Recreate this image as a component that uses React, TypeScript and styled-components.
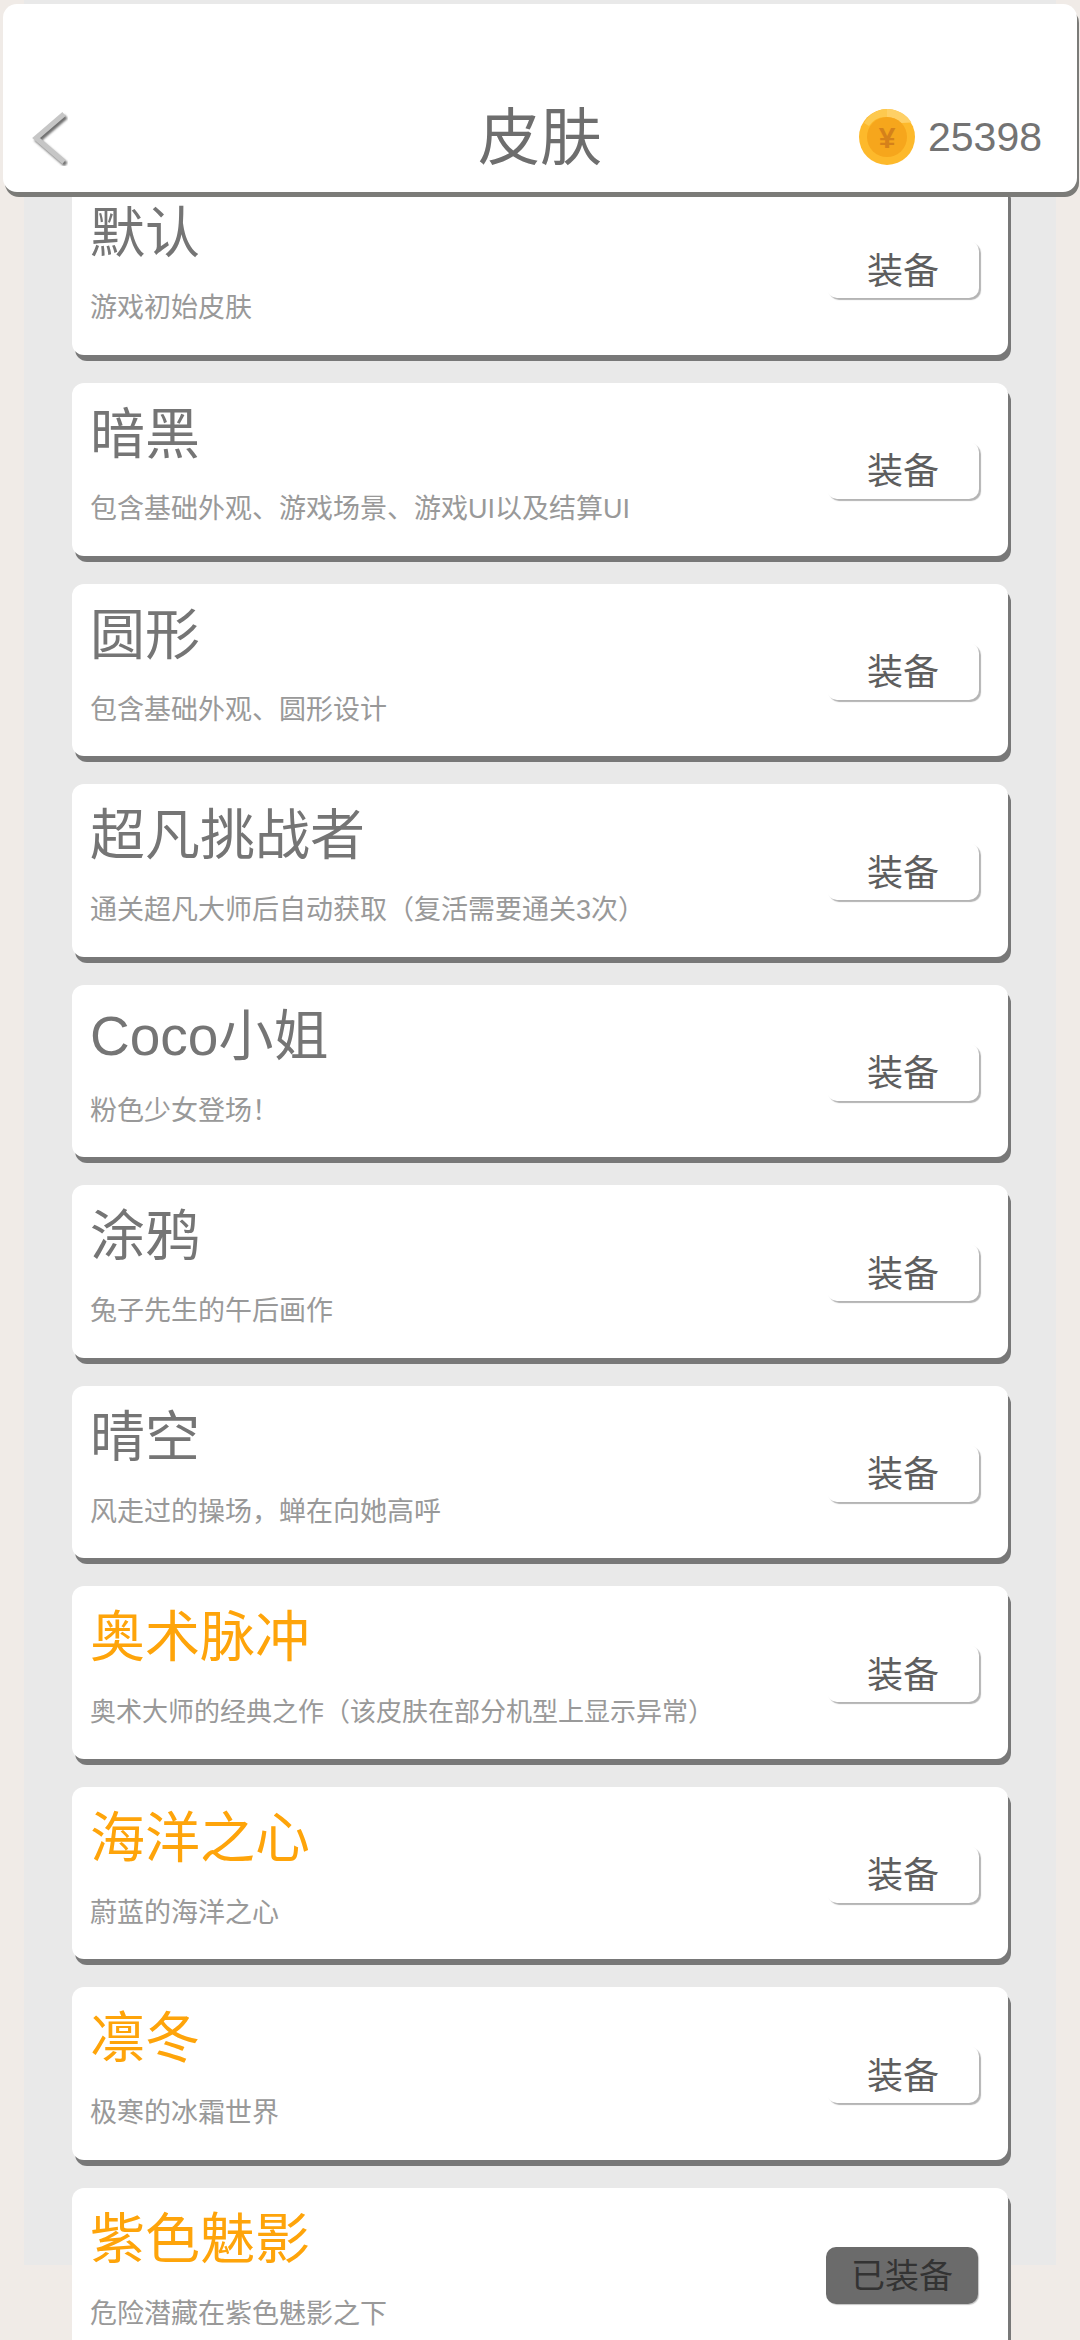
import React from "react";
import styled, { createGlobalStyle } from "styled-components";

const Global = createGlobalStyle`
  html, body { margin: 0; padding: 0; background: #f0ebe7; }
  body { font-family: "Liberation Sans", "Noto Sans CJK SC", sans-serif; }
`;

const Page = styled.div`
  position: relative;
  width: 1080px;
  height: 2340px;
  overflow: hidden;
  background: #f0ebe7;
`;

const Panel = styled.main`
  box-sizing: border-box;
  margin-left: 24px;
  width: 1032px;
  height: 2265px;
  padding: 182.45px 48px 0;
  background: #e9e9e9;
  display: flex;
  flex-direction: column;
  gap: 28px;
`;

const Card = styled.article`
  flex: 0 0 172.55px;
  display: flex;
  justify-content: space-between;
  align-items: flex-start;
  background: #fff;
  border-radius: 12px;
  box-shadow: 3px 6px 0 #787878;
`;

const Info = styled.div`
  padding: 21px 0 0 18px;
`;

const Title = styled.h2<{ $gold?: boolean }>`
  margin: 0;
  font-size: 55px;
  line-height: 60px;
  font-weight: 400;
  color: ${(p) => (p.$gold ? "#fea40a" : "#757575")};
`;

const Sub = styled.p<{ $fit?: boolean }>`
  margin: 28px 0 0;
  font-size: ${(p) => (p.$fit ? "26px" : "27px")};
  line-height: 34px;
  color: #999;
  white-space: nowrap;
`;

const Equip = styled.button<{ $on?: boolean }>`
  box-sizing: border-box;
  width: ${(p) => (p.$on ? "152px" : "152px")};
  height: 57px;
  margin: ${(p) => (p.$on ? "59px 30px 0 0" : "59px 29px 0 0")};
  padding: 0 0 4px;
  border: 0;
  border-radius: 10px;
  font-family: inherit;
  font-size: ${(p) => (p.$on ? "34px" : "36px")};
  color: ${(p) => (p.$on ? "#333" : "#5e5e5e")};
  background: ${(p) => (p.$on ? "#6b6b6b" : "#fff")};
  box-shadow: ${(p) => (p.$on ? "1px 1px 1px #c4c4c4" : "2px 2px 1px #b4b4b4")};
`;

const Header = styled.header`
  position: absolute;
  top: 4px;
  left: 3px;
  width: 1074px;
  height: 188px;
  box-sizing: border-box;
  padding: 0 35px 0 29px;
  display: flex;
  align-items: flex-end;
  justify-content: space-between;
  background: #fff;
  border-radius: 14px;
  box-shadow: 2px 5px 0 #7b7b78;
`;

const Back = styled.svg`
  width: 36px;
  height: 54px;
  margin-bottom: 26px;
  flex: none;
`;

const PageTitle = styled.h1`
  position: absolute;
  left: 0;
  right: 0;
  bottom: 18px;
  margin: 0;
  text-align: center;
  font-size: 62px;
  line-height: 70px;
  font-weight: 400;
  color: #6e6e6e;
`;

const Wallet = styled.div`
  display: flex;
  align-items: center;
  gap: 13px;
  margin-bottom: 27px;
`;

const Coin = styled.svg`
  width: 56px;
  height: 56px;
  display: block;
`;

const Amount = styled.span`
  font-size: 41px;
  line-height: 56px;
  color: #737373;
`;

const skins: { t: string; s: string; gold?: boolean; on?: boolean; fit?: boolean }[] = [
  { t: "默认", s: "游戏初始皮肤" },
  { t: "暗黑", s: "包含基础外观、游戏场景、游戏UI以及结算UI" },
  { t: "圆形", s: "包含基础外观、圆形设计" },
  { t: "超凡挑战者", s: "通关超凡大师后自动获取（复活需要通关3次）" },
  { t: "Coco小姐", s: "粉色少女登场！" },
  { t: "涂鸦", s: "兔子先生的午后画作" },
  { t: "晴空", s: "风走过的操场，蝉在向她高呼" },
  { t: "奥术脉冲", s: "奥术大师的经典之作（该皮肤在部分机型上显示异常）", gold: true, fit: true },
  { t: "海洋之心", s: "蔚蓝的海洋之心", gold: true },
  { t: "凛冬", s: "极寒的冰霜世界", gold: true },
  { t: "紫色魅影", s: "危险潜藏在紫色魅影之下", gold: true, on: true },
];

export default function App() {
  return (
    <Page>
      <Global />
      <Panel>
        {skins.map((k) => (
          <Card key={k.t}>
            <Info>
              <Title $gold={k.gold}>{k.t}</Title>
              <Sub $fit={k.fit}>{k.s}</Sub>
            </Info>
            <Equip $on={k.on}>{k.on ? "已装备" : "装备"}</Equip>
          </Card>
        ))}
      </Panel>
      <Header>
        <Back viewBox="0 0 36 54">
          <defs>
            <filter id="soft" x="-30%" y="-30%" width="160%" height="160%">
              <feGaussianBlur stdDeviation="0.8" />
            </filter>
          </defs>
          <polyline points="33,3 5,27 33,51" fill="none" stroke="#6f6f6f" strokeWidth="5" filter="url(#soft)" transform="translate(1 1.5)" />
          <polyline points="32,2 4,26 32,50" fill="none" stroke="#c6c6c6" strokeWidth="5" />
        </Back>
        <PageTitle>皮肤</PageTitle>
        <Wallet>
          <Coin viewBox="0 0 56 56">
            <circle cx="28" cy="28" r="28" fill="#fdb92b" />
            <path d="M28 0a28 28 0 0 1 24.5 13.5L42 14A20 20 0 0 0 28 8Z" fill="#fed066" />
            <path d="M5 14A28 28 0 0 1 28 0v8A20 20 0 0 0 10 17Z" fill="#fdc94f" />
            <circle cx="28" cy="28" r="20" fill="#f6a61c" />
            <text x="28" y="39" textAnchor="middle" fontSize="30" fontWeight="700" fontFamily="Liberation Sans" fill="#d5811a">¥</text>
          </Coin>
          <Amount>25398</Amount>
        </Wallet>
      </Header>
    </Page>
  );
}
